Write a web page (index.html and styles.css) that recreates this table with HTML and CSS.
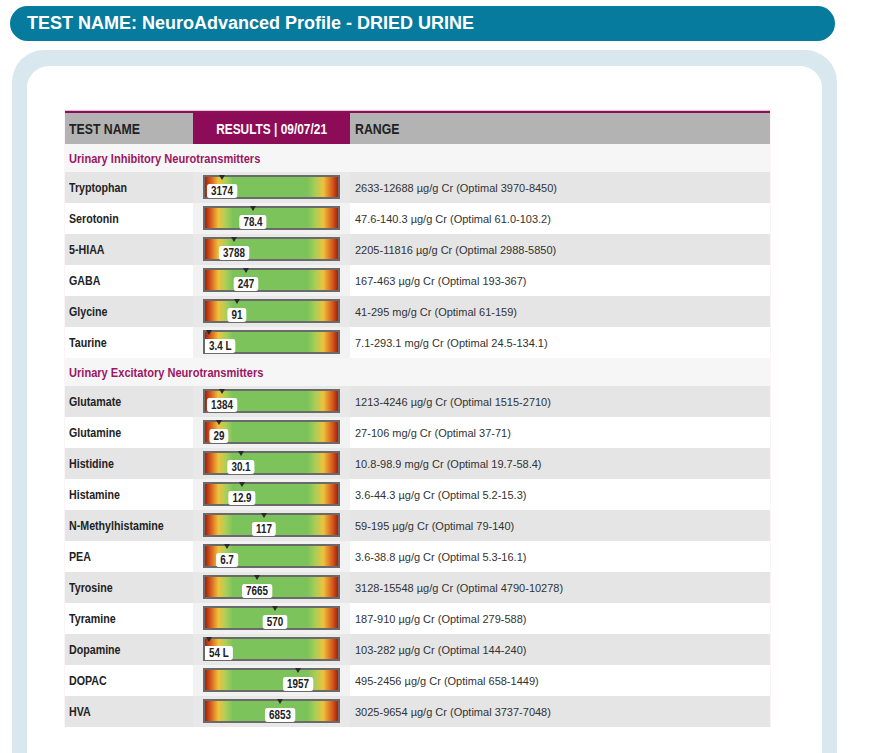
FILE: index.html
```html
<!DOCTYPE html>
<html>
<head>
<meta charset="utf-8">
<link rel="stylesheet" href="styles.css">
</head>
<body>
<div class="title-bar">TEST NAME: NeuroAdvanced Profile - DRIED URINE</div>
<div class="panel">
  <div class="panel-inner">
    <div class="report">
      <div class="row head">
        <div class="c-name"><span class="n">TEST NAME</span></div>
        <div class="c-res"><span class="n">RESULTS | 09/07/21</span></div>
        <div class="c-range"><span class="n">RANGE</span></div>
      </div>
      <div class="section"><span class="n">Urinary Inhibitory Neurotransmitters</span></div>
      <div class="row alt">
        <div class="c-name"><span class="n">Tryptophan</span></div>
        <div class="c-res"><div class="bar"><span class="marker" style="left:12.8%"></span><span class="val" style="left:12.8%">3174</span></div></div>
        <div class="c-range">2633-12688 µg/g Cr (Optimal 3970-8450)</div>
      </div>
      <div class="row">
        <div class="c-name"><span class="n">Serotonin</span></div>
        <div class="c-res"><div class="bar"><span class="marker" style="left:36%"></span><span class="val" style="left:36%">78.4</span></div></div>
        <div class="c-range">47.6-140.3 µg/g Cr (Optimal 61.0-103.2)</div>
      </div>
      <div class="row alt">
        <div class="c-name"><span class="n">5-HIAA</span></div>
        <div class="c-res"><div class="bar"><span class="marker" style="left:21.8%"></span><span class="val" style="left:21.8%">3788</span></div></div>
        <div class="c-range">2205-11816 µg/g Cr (Optimal 2988-5850)</div>
      </div>
      <div class="row">
        <div class="c-name"><span class="n">GABA</span></div>
        <div class="c-res"><div class="bar"><span class="marker" style="left:30.8%"></span><span class="val" style="left:30.8%">247</span></div></div>
        <div class="c-range">167-463 µg/g Cr (Optimal 193-367)</div>
      </div>
      <div class="row alt">
        <div class="c-name"><span class="n">Glycine</span></div>
        <div class="c-res"><div class="bar"><span class="marker" style="left:24%"></span><span class="val" style="left:24%">91</span></div></div>
        <div class="c-range">41-295 mg/g Cr (Optimal 61-159)</div>
      </div>
      <div class="row">
        <div class="c-name"><span class="n">Taurine</span></div>
        <div class="c-res"><div class="bar"><span class="marker" style="left:3%"></span><span class="val edge">3.4 L</span></div></div>
        <div class="c-range">7.1-293.1 mg/g Cr (Optimal 24.5-134.1)</div>
      </div>
      <div class="section"><span class="n">Urinary Excitatory Neurotransmitters</span></div>
      <div class="row alt">
        <div class="c-name"><span class="n">Glutamate</span></div>
        <div class="c-res"><div class="bar"><span class="marker" style="left:12.8%"></span><span class="val" style="left:12.8%">1384</span></div></div>
        <div class="c-range">1213-4246 µg/g Cr (Optimal 1515-2710)</div>
      </div>
      <div class="row">
        <div class="c-name"><span class="n">Glutamine</span></div>
        <div class="c-res"><div class="bar"><span class="marker" style="left:10.5%"></span><span class="val" style="left:10.5%">29</span></div></div>
        <div class="c-range">27-106 mg/g Cr (Optimal 37-71)</div>
      </div>
      <div class="row alt">
        <div class="c-name"><span class="n">Histidine</span></div>
        <div class="c-res"><div class="bar"><span class="marker" style="left:27%"></span><span class="val" style="left:27%">30.1</span></div></div>
        <div class="c-range">10.8-98.9 mg/g Cr (Optimal 19.7-58.4)</div>
      </div>
      <div class="row">
        <div class="c-name"><span class="n">Histamine</span></div>
        <div class="c-res"><div class="bar"><span class="marker" style="left:27.5%"></span><span class="val" style="left:27.5%">12.9</span></div></div>
        <div class="c-range">3.6-44.3 µg/g Cr (Optimal 5.2-15.3)</div>
      </div>
      <div class="row alt">
        <div class="c-name"><span class="n">N-Methylhistamine</span></div>
        <div class="c-res"><div class="bar"><span class="marker" style="left:44%"></span><span class="val" style="left:44%">117</span></div></div>
        <div class="c-range">59-195 µg/g Cr (Optimal 79-140)</div>
      </div>
      <div class="row">
        <div class="c-name"><span class="n">PEA</span></div>
        <div class="c-res"><div class="bar"><span class="marker" style="left:16.3%"></span><span class="val" style="left:16.3%">6.7</span></div></div>
        <div class="c-range">3.6-38.8 µg/g Cr (Optimal 5.3-16.1)</div>
      </div>
      <div class="row alt">
        <div class="c-name"><span class="n">Tyrosine</span></div>
        <div class="c-res"><div class="bar"><span class="marker" style="left:39%"></span><span class="val" style="left:39%">7665</span></div></div>
        <div class="c-range">3128-15548 µg/g Cr (Optimal 4790-10278)</div>
      </div>
      <div class="row">
        <div class="c-name"><span class="n">Tyramine</span></div>
        <div class="c-res"><div class="bar"><span class="marker" style="left:52.6%"></span><span class="val" style="left:52.6%">570</span></div></div>
        <div class="c-range">187-910 µg/g Cr (Optimal 279-588)</div>
      </div>
      <div class="row alt">
        <div class="c-name"><span class="n">Dopamine</span></div>
        <div class="c-res"><div class="bar"><span class="marker" style="left:3%"></span><span class="val edge">54 L</span></div></div>
        <div class="c-range">103-282 µg/g Cr (Optimal 144-240)</div>
      </div>
      <div class="row">
        <div class="c-name"><span class="n">DOPAC</span></div>
        <div class="c-res"><div class="bar"><span class="marker" style="left:70%"></span><span class="val" style="left:70%">1957</span></div></div>
        <div class="c-range">495-2456 µg/g Cr (Optimal 658-1449)</div>
      </div>
      <div class="row alt">
        <div class="c-name"><span class="n">HVA</span></div>
        <div class="c-res"><div class="bar"><span class="marker" style="left:56.4%"></span><span class="val" style="left:56.4%">6853</span></div></div>
        <div class="c-range">3025-9654 µg/g Cr (Optimal 3737-7048)</div>
      </div>
    </div>
  </div>
</div>
</body>
</html>
```

FILE: styles.css
```css
html, body {
  margin: 0;
  padding: 0;
  background: #ffffff;
  height: 753px;
  overflow: hidden;
}

body {
  font-family: "Liberation Sans", Arial, sans-serif;
  color: #222;
}

.title-bar {
  margin: 6px 35px 0 10px;
  height: 35px;
  line-height: 35px;
  border-radius: 18px;
  background: #077b9e;
  color: #ffffff;
  font-weight: bold;
  font-size: 18px;
  padding-left: 17px;
}

.panel {
  margin: 9px 33px 0 12px;
  background: #d9e8ee;
  border-radius: 32px 32px 0 0;
  padding: 16px 15px 0 15px;
  height: 700px;
}

.panel-inner {
  background: #ffffff;
  border-radius: 22px 22px 0 0;
  padding: 45px 52px 0 38px;
  height: 660px;
}

.report {
  width: 705px;
  border-top: 2px solid #8c1058;
  box-shadow: 0 -1px 1px rgba(140, 16, 88, 0.25);
}

/* Arial-Narrow look: Liberation Sans compressed horizontally */
.n {
  display: inline-block;
  white-space: nowrap;
  transform: scaleX(0.82);
  transform-origin: 0 50%;
}

.row {
  display: grid;
  grid-template-columns: 128px 157px 1fr;
  height: 31px;
  background: #ffffff;
}

.row.alt {
  background: #e5e5e5;
}

.row > div {
  display: flex;
  align-items: center;
}

.c-name {
  padding-left: 4px;
  font-weight: bold;
  font-size: 13px;
  color: #222;
}

.c-range {
  padding-left: 5px;
  font-size: 11px;
  color: #333;
}

.row .c-res {
  background: #f2f2f2;
  padding-left: 10px;
}

.row.alt .c-res {
  background: #e8e8e8;
}

.head {
  background: #b3b3b3;
}

.head .c-name {
  font-size: 15px;
  color: #222;
}

.head .c-res {
  background: #8c0c57;
  color: #ffffff;
  justify-content: center;
  padding-left: 0;
  font-weight: bold;
  font-size: 14.5px;
}

.head .c-res .n {
  transform-origin: 50% 50%;
}

.head .c-range {
  font-weight: bold;
  font-size: 15px;
  color: #222;
}

.section {
  height: 28px;
  line-height: 29px;
  background: #f6f6f6;
  padding-left: 4px;
  font-weight: bold;
  font-size: 13.5px;
  color: #9a1665;
}

.bar {
  position: relative;
  width: 133px;
  height: 20px;
  margin-top: -1px;
  border: 2px solid #6a6a6a;
  background: linear-gradient(to right,
    #a3200c 0%,
    #d4561c 4%,
    #efc23c 10%,
    #a7cf59 16%,
    #7cc35b 21%,
    #7cc35b 77%,
    #a9cd58 83%,
    #efc23c 89%,
    #d4561c 96%,
    #a3200c 100%);
}

.marker {
  position: absolute;
  top: -2px;
  width: 0;
  height: 0;
  border-left: 3.5px solid transparent;
  border-right: 3.5px solid transparent;
  border-top: 5px solid #2a2a2a;
  transform: translateX(-50%);
}

.val {
  position: absolute;
  bottom: -1px;
  transform: translateX(-50%) scaleX(0.82);
  transform-origin: 50% 50%;
  background: #ffffff;
  border-radius: 3px;
  padding: 0 5px;
  height: 14px;
  line-height: 15px;
  font-weight: bold;
  font-size: 12px;
  color: #222;
  white-space: nowrap;
}

.val.edge {
  left: 0;
  transform: scaleX(0.82);
  transform-origin: 0 50%;
  border-radius: 0 3px 3px 0;
}
```
